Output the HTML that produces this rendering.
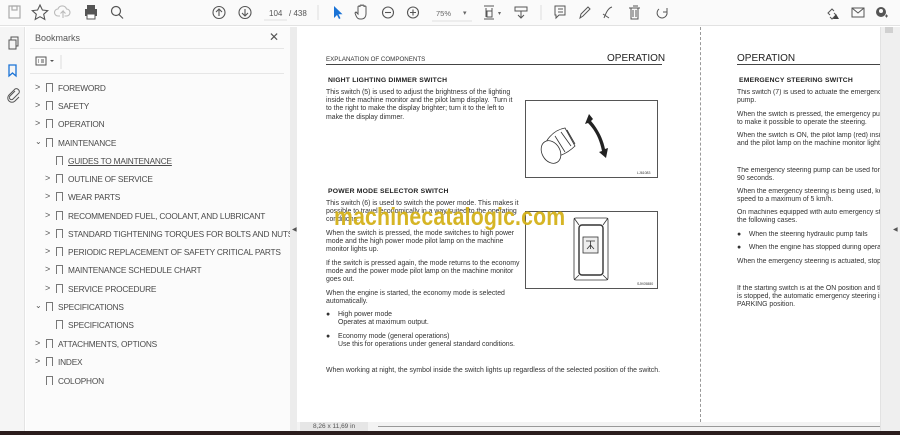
<!DOCTYPE html>
<html><head><meta charset="utf-8"><style>
*{margin:0;padding:0;box-sizing:border-box}
body{width:900px;height:435px;overflow:hidden;background:#fff;font-family:"Liberation Sans",sans-serif;position:relative}
.a{position:absolute}
.tb{left:0;top:0;width:900px;height:26px;background:#fafafa;border-bottom:1px solid #e2e2e2}
.rail{left:0;top:27px;width:25px;height:404px;background:#f5f5f5;border-right:1px solid #e4e4e4}
.panel{left:26px;top:27px;width:264px;height:404px;background:#fbfbfb}
.sep{left:290px;top:27px;width:7px;height:404px;background:#ececec}
.bm{position:absolute;font-size:8.3px;color:#4a4a4a;white-space:nowrap;letter-spacing:-.2px}
.bm .chev{position:absolute;left:-23px;top:-1px;font-size:9px;color:#555}
.bm .flag{position:absolute;left:-12px;top:0;width:7px;height:9px;border:1px solid #777;border-bottom:none}
.pt{position:absolute;font-size:6.9px;color:#333;line-height:8.2px;white-space:nowrap}
.h{position:absolute;font-size:6.8px;font-weight:bold;color:#222;letter-spacing:.2px}
</style></head><body>
<div class="a tb"></div>
<svg class="a" style="left:0;top:0" width="900" height="26">
<g fill="none" stroke="#aaa" stroke-width="1.2"><rect x="9" y="6" width="11" height="12"/><rect x="12" y="6" width="5" height="4"/></g>
<path d="M40 5l2.4 5 5.3.6-4 3.6 1.1 5.2-4.8-2.7-4.8 2.7 1.1-5.2-4-3.6 5.3-.6z" fill="none" stroke="#555" stroke-width="1.1"/>
<path d="M60 16h-2a3.5 3.5 0 010-7 4.5 4.5 0 018.5 0 3.5 3.5 0 010 7h-2M63 18v-7l-2.5 2.5M63 11l2.5 2.5" fill="none" stroke="#bbb" stroke-width="1.1"/>
<g fill="#555"><rect x="85" y="9" width="12" height="7"/><rect x="87" y="5" width="8" height="4"/><rect x="87" y="14" width="8" height="5" fill="#fff" stroke="#555"/></g>
<g fill="none" stroke="#555" stroke-width="1.2"><circle cx="116" cy="11" r="4.5"/><path d="M119 14.5l4 4"/></g>
<g fill="none" stroke="#555" stroke-width="1.1"><circle cx="219" cy="12.5" r="6"/><path d="M219 16v-7M216 12l3-3 3 3"/><circle cx="245" cy="12.5" r="6"/><path d="M245 9v7M242 13l3 3 3-3"/></g>
<line x1="264" y1="20" x2="287" y2="20" stroke="#e0e0e0"/>
<text x="269" y="16" font-size="8" fill="#555" font-family="Liberation Sans">104</text>
<text x="289" y="16" font-size="8" fill="#555" font-family="Liberation Sans">/ 438</text>
<line x1="318" y1="5" x2="318" y2="20" stroke="#ddd"/>
<path d="M334 6v12l3-3 2 4 1.5-.7-2-4h4z" fill="#1a73d6"/>
<path d="M360 19c-3 0-4-3-5-6l1-1 2 2v-7a1 1 0 012 0v-1a1 1 0 012 0a1 1 0 012 0v1a1 1 0 012 0v7c0 3-2 5-4 5z" fill="none" stroke="#555" stroke-width="1"/>
<g fill="none" stroke="#555" stroke-width="1.1"><circle cx="388" cy="12.5" r="5.5"/><path d="M385 12.5h6"/><circle cx="413" cy="12.5" r="5.5"/><path d="M410 12.5h6M413 9.5v6"/></g>
<line x1="432" y1="21" x2="472" y2="21" stroke="#e0e0e0"/>
<text x="436" y="16" font-size="7.5" fill="#666" font-family="Liberation Sans">75%</text>
<text x="463" y="15" font-size="7" fill="#666">▾</text>
<g fill="none" stroke="#555" stroke-width="1"><path d="M484 6h10M484 19h10M486 8v9M492 8v9"/><rect x="487" y="11" width="5" height="6"/></g>
<text x="498" y="15" font-size="6" fill="#666">▾</text>
<g fill="none" stroke="#555" stroke-width="1"><rect x="515" y="7" width="12" height="4"/><path d="M521 11v7M518 15l3 3 3-3"/></g>
<line x1="541" y1="5" x2="541" y2="20" stroke="#ddd"/>
<g fill="none" stroke="#555" stroke-width="1"><path d="M555 6h10v9h-6l-3 3v-3h-1z"/><path d="M558 9h5M558 12h5"/>
<path d="M580 18l1-4 7-7 2 2-7 7z"/><path d="M604 18c2-5 4-10 8-11M603 14l6 4"/><path d="M629 8h11M631 8v11h7v-11M633 6h5M633 10v7M636 10v7"/>
<path d="M659 9a5 5 0 108 3M667 8v4h-4"/></g>
<g fill="none" stroke="#555" stroke-width="1"><path d="M830 15l-2-2 4-4 2 2M834 13l2 2-4 4-2-2"/><path d="M852 8h12v9h-12zM852 8l6 5 6-5"/></g>
<path d="M833 19l3-5 3 5z" fill="#444"/>
<circle cx="881" cy="12" r="5" fill="#555"/><circle cx="881" cy="11" r="2" fill="#fafafa"/><path d="M885 16h3M886.5 14.5v3" stroke="#555"/>
</svg>
<div class="a rail"></div>
<svg class="a" style="left:0;top:27px" width="25" height="90">
<g fill="none" stroke="#555" stroke-width="1"><rect x="9" y="13" width="7" height="9"/><path d="M11 13v-3h7v9h-2"/></g>
<path d="M9 38h7v11l-3.5-3-3.5 3z" fill="none" stroke="#1a73d6" stroke-width="1.3"/>
<path d="M15 64l-5 5a2 2 0 003 3l6-6a3 3 0 00-4-4l-6 6a4 4 0 006 6l4-4" fill="none" stroke="#555" stroke-width="1"/>
</svg>
<div class="a panel"></div>
<div class="a" style="left:35px;top:33px;font-size:9px;color:#555">Bookmarks</div>
<div class="a" style="left:269px;top:30px;font-size:12px;color:#555">✕</div>
<div class="a" style="left:30px;top:48px;width:254px;height:1px;background:#e6e6e6"></div>
<svg class="a" style="left:34px;top:55px" width="30" height="14"><rect x="2" y="2" width="10" height="8" fill="none" stroke="#555"/><path d="M4 5h1M4 7h1M7 5h3M7 7h3" stroke="#555"/><path d="M16 5l2 2 2-2z" fill="#555"/><line x1="27" y1="0" x2="27" y2="14" stroke="#ddd"/></svg>
<div class="a" style="left:30px;top:73px;width:254px;height:1px;background:#e6e6e6"></div>
<div class="bm" style="left:58px;top:83px"><span class="chev">&gt;</span><span class="flag"></span>FOREWORD</div>
<div class="bm" style="left:58px;top:101px"><span class="chev">&gt;</span><span class="flag"></span>SAFETY</div>
<div class="bm" style="left:58px;top:119px"><span class="chev">&gt;</span><span class="flag"></span>OPERATION</div>
<div class="bm" style="left:58px;top:138px"><span class="chev" style="font-size:8px">⌄</span><span class="flag"></span>MAINTENANCE</div>
<div class="bm" style="left:68px;top:156px;text-decoration:underline"><span class="flag"></span>GUIDES TO MAINTENANCE</div>
<div class="bm" style="left:68px;top:174px"><span class="chev">&gt;</span><span class="flag"></span>OUTLINE OF SERVICE</div>
<div class="bm" style="left:68px;top:192px"><span class="chev">&gt;</span><span class="flag"></span>WEAR PARTS</div>
<div class="bm" style="left:68px;top:211px"><span class="chev">&gt;</span><span class="flag"></span>RECOMMENDED FUEL, COOLANT, AND LUBRICANT</div>
<div class="bm" style="left:68px;top:229px"><span class="chev">&gt;</span><span class="flag"></span>STANDARD TIGHTENING TORQUES FOR BOLTS AND NUTS</div>
<div class="bm" style="left:68px;top:247px"><span class="chev">&gt;</span><span class="flag"></span>PERIODIC REPLACEMENT OF SAFETY CRITICAL PARTS</div>
<div class="bm" style="left:68px;top:265px"><span class="chev">&gt;</span><span class="flag"></span>MAINTENANCE SCHEDULE CHART</div>
<div class="bm" style="left:68px;top:284px"><span class="chev">&gt;</span><span class="flag"></span>SERVICE PROCEDURE</div>
<div class="bm" style="left:58px;top:302px"><span class="chev" style="font-size:8px">⌄</span><span class="flag"></span>SPECIFICATIONS</div>
<div class="bm" style="left:68px;top:320px"><span class="flag"></span>SPECIFICATIONS</div>
<div class="bm" style="left:58px;top:339px"><span class="chev">&gt;</span><span class="flag"></span>ATTACHMENTS, OPTIONS</div>
<div class="bm" style="left:58px;top:357px"><span class="chev">&gt;</span><span class="flag"></span>INDEX</div>
<div class="bm" style="left:58px;top:376px"><span class="flag"></span>COLOPHON</div>
<div class="a sep"></div>
<div class="a" style="left:292px;top:226px;font-size:6px;color:#555">◀</div>
<div class="a" style="left:297px;top:27px;width:583px;height:395px;background:#fff"></div>
<div class="a" style="left:700px;top:27px;height:395px;border-left:1px dashed #999"></div>
<div class="a" style="left:880px;top:27px;width:20px;height:404px;background:#efefef;border-left:1px solid #e2e2e2"></div>
<div class="a" style="left:885px;top:27px;width:8px;height:6px;background:#d0d0d0"></div>
<div class="a" style="left:893px;top:226px;font-size:6px;color:#555">◀</div>
<div class="pt" style="left:326px;top:56px;font-size:6.2px">EXPLANATION OF COMPONENTS</div>
<div class="a" style="left:607px;top:53px;font-size:10px;color:#222">OPERATION</div>
<div class="a" style="left:326px;top:64px;width:336px;height:1px;background:#444"></div>
<div class="h" style="left:328px;top:77px">NIGHT LIGHTING DIMMER SWITCH</div>
<div class="pt" style="left:326px;top:89px">This switch (5) is used to adjust the brightness of the lighting<br>inside the machine monitor and the pilot lamp display.&nbsp; Turn it<br>to the right to make the display brighter; turn it to the left to<br>make the display dimmer.</div>
<div class="a" style="left:525px;top:100px;width:133px;height:78px;border:1px solid #555"></div>
<svg class="a" style="left:525px;top:100px" width="133" height="78"><g fill="#fff" stroke="#333" stroke-width=".8"><path d="M20 50c-2-8 8-20 20-22l10 18c-8 8-22 14-28 10z"/><ellipse cx="26" cy="52" rx="9" ry="12" transform="rotate(-30 26 52)"/><path d="M30 36l10 16M36 32l10 14M42 30l8 14"/></g><path d="M64 14l-4 10 3-1c8 8 12 18 14 28l-3 1 7 6 2-10-3 1c-2-10-7-20-14-28l2-2z" fill="#222"/><text x="112" y="74" font-size="3.5" fill="#333">LJ61083</text></svg>
<div class="h" style="left:328px;top:188px">POWER MODE SELECTOR SWITCH</div>
<div class="pt" style="left:326px;top:200px">This switch (6) is used to switch the power mode. This makes it<br>possible to travel economically in a way suited to the operating<br>conditions.</div>
<div class="pt" style="left:326px;top:230px">When the switch is pressed, the mode switches to high power<br>mode and the high power mode pilot lamp on the machine<br>monitor lights up.</div>
<div class="pt" style="left:326px;top:260px">If the switch is pressed again, the mode returns to the economy<br>mode and the power mode pilot lamp on the machine monitor<br>goes out.</div>
<div class="pt" style="left:326px;top:290px">When the engine is started, the economy mode is selected<br>automatically.</div>
<div class="pt" style="left:326px;top:311px">●</div><div class="pt" style="left:338px;top:311px">High power mode<br>Operates at maximum output.</div>
<div class="pt" style="left:326px;top:333px">●</div><div class="pt" style="left:338px;top:333px">Economy mode (general operations)<br>Use this for operations under general standard conditions.</div>
<div class="pt" style="left:326px;top:367px">When working at night, the symbol inside the switch lights up regardless of the selected position of the switch.</div>
<div class="a" style="left:525px;top:211px;width:133px;height:78px;border:1px solid #555"></div>
<svg class="a" style="left:525px;top:211px" width="133" height="78"><g fill="none" stroke="#333" stroke-width=".8"><rect x="49" y="7" width="34" height="62" rx="2"/><rect x="54" y="14" width="24" height="50" rx="3" stroke-width="1.4"/><path d="M49 7l5 7M83 7l-5 7M49 69l5-5M83 69l-5-5"/><rect x="58" y="26" width="15" height="16" fill="#eee"/><path d="M61 30h9M65.5 30v8M62 38l3.5-4 3.5 4"/></g><text x="112" y="74" font-size="3.5" fill="#333">SJK05880</text></svg>
<div class="a" style="left:334px;top:203px;font-size:25px;font-weight:bold;color:#d4b21a;letter-spacing:.2px;opacity:.95;transform:scaleX(.85);transform-origin:0 0">machinecatalogic.com</div>
<div class="a" style="left:737px;top:53px;font-size:10px;color:#222">OPERATION</div>
<div class="a" style="left:737px;top:64px;width:143px;height:1px;background:#444"></div>
<div class="h" style="left:739px;top:77px">EMERGENCY STEERING SWITCH</div>
<div class="pt" style="left:737px;top:89px;width:143px;overflow:hidden">This switch (7) is used to actuate the emergency steering<br>pump.</div>
<div class="pt" style="left:737px;top:111px;width:143px;overflow:hidden">When the switch is pressed, the emergency pump is actuated<br>to make it possible to operate the steering.</div>
<div class="pt" style="left:737px;top:132px;width:143px;overflow:hidden">When the switch is ON, the pilot lamp (red) inside the switch<br>and the pilot lamp on the machine monitor light up.</div>
<div class="pt" style="left:737px;top:167px;width:143px;overflow:hidden">The emergency steering pump can be used for a maximum of<br>90 seconds.</div>
<div class="pt" style="left:737px;top:188px;width:143px;overflow:hidden">When the emergency steering is being used, keep the travel<br>speed to a maximum of 5 km/h.</div>
<div class="pt" style="left:737px;top:209px;width:143px;overflow:hidden">On machines equipped with auto emergency steering, it works in<br>the following cases.</div>
<div class="pt" style="left:737px;top:231px;width:143px;overflow:hidden">●&nbsp;&nbsp;&nbsp; When the steering hydraulic pump fails</div>
<div class="pt" style="left:737px;top:244px;width:143px;overflow:hidden">●&nbsp;&nbsp;&nbsp; When the engine has stopped during operation</div>
<div class="pt" style="left:737px;top:258px;width:143px;overflow:hidden">When the emergency steering is actuated, stop the machine</div>
<div class="pt" style="left:737px;top:285px;width:143px;overflow:hidden">If the starting switch is at the ON position and the engine<br>is stopped, the automatic emergency steering is actuated<br>PARKING position.</div>
<div class="a" style="left:297px;top:422px;width:583px;height:9px;background:#f3f3f3"></div>
<div class="a" style="left:300px;top:422px;width:68px;height:9px;background:#e6e6e6"></div>
<div class="a" style="left:313px;top:423px;font-size:6.5px;color:#555">8,26 x 11,69 in</div>
<div class="a" style="left:378px;top:426px;width:502px;height:1px;background:#999"></div>
<div class="a" style="left:0;top:431px;width:900px;height:4px;background:#2b1d1d"></div>
</body></html>
